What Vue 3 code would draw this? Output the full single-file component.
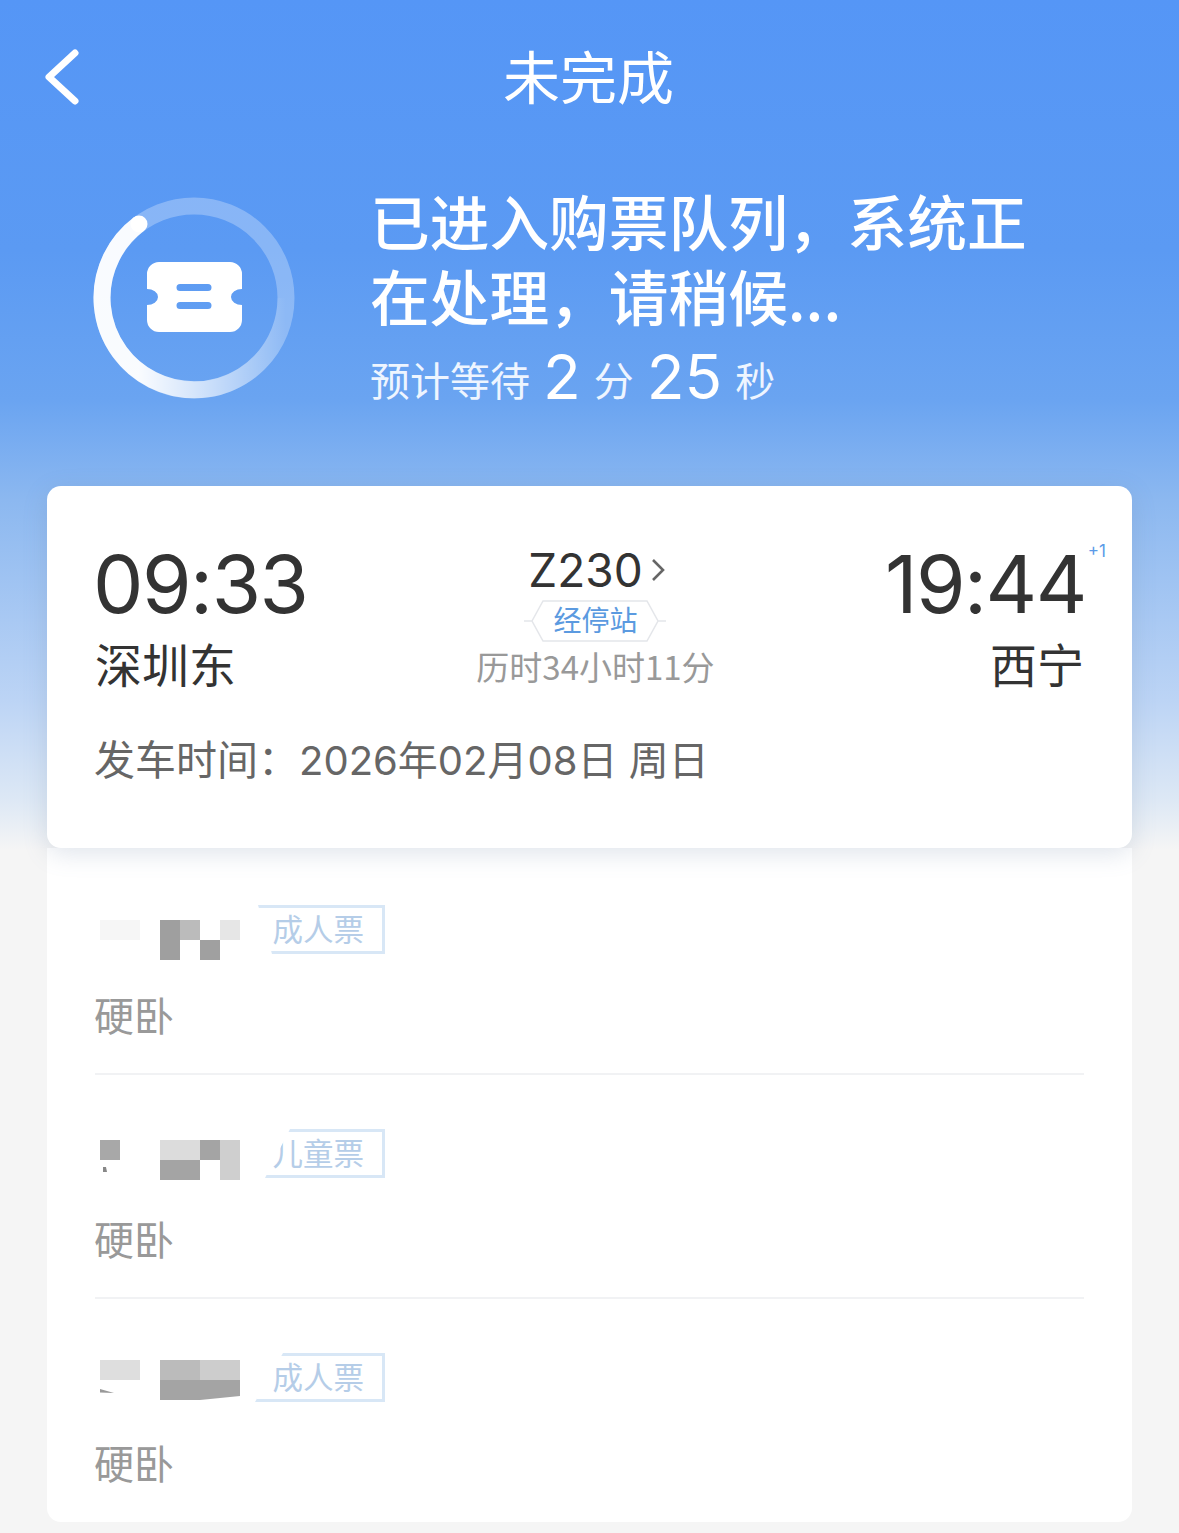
<template>
  <div class="page">
    <div class="nav">
      <svg class="back" width="36" height="56" viewBox="0 0 36 56" fill="none" stroke="#fff" stroke-width="7" stroke-linecap="round" stroke-linejoin="round">
        <path d="M31 4 L5 28 L31 52" />
      </svg>
      <div class="nav-title">未完成</div>
    </div>

    <div class="status">
      <svg class="ring" width="204" height="204" viewBox="0 0 204 204" fill="none">
        <defs>
          <linearGradient id="arc" x1="0" y1="0" x2="1" y2="0">
            <stop offset="0.2" stop-color="#ffffff" stop-opacity="0.95" />
            <stop offset="0.5" stop-color="#ffffff" stop-opacity="0.62" />
            <stop offset="1" stop-color="#ffffff" stop-opacity="0" />
          </linearGradient>
        </defs>
        <circle cx="102" cy="102" r="92" stroke="#fff" stroke-opacity="0.28" stroke-width="17" />
        <path d="M47 28 A92 92 0 1 0 194 102" stroke="url(#arc)" stroke-width="17" />
        <circle cx="47" cy="28" r="8.5" fill="#fff" />
        <path fill="#fff" fill-rule="evenodd" d="M67 66 H138 a12 12 0 0 1 12 12 V93 a11 8 0 0 0 0 16 V124 a12 12 0 0 1 -12 12 H67 a12 12 0 0 1 -12 -12 V109 a11 8 0 0 0 0 -16 V78 a12 12 0 0 1 12 -12 Z M88 88 a3.5 3.5 0 0 0 0 7 H116 a3.5 3.5 0 0 0 0 -7 Z M88 106 a3.5 3.5 0 0 0 0 7 H116 a3.5 3.5 0 0 0 0 -7 Z" />
      </svg>
      <div class="status-text">
        <div class="status-title">已进入购票队列，系统正在处理，请稍候...</div>
        <div class="status-wait">预计等待 <b>2</b> 分 <b>25</b> 秒</div>
      </div>
    </div>

    <div class="card">
      <div class="trip">
        <div class="end">
          <div class="time">09:33</div>
          <div class="station">深圳东</div>
        </div>
        <div class="middle">
          <div class="train">Z230
            <svg width="14" height="26" viewBox="0 0 14 26" fill="none" stroke="#666" stroke-width="2.6"><path d="M2 3 L12 13 L2 23" /></svg>
          </div>
          <div class="stops">
            <svg class="stops-shape" width="142" height="42" viewBox="0 0 142 42" fill="none" stroke="#e4e6ea" stroke-width="1.5">
              <path d="M0 21 H8 M134 21 H142 M8 21 L19 1 H123 L134 21 L123 41 H19 Z" />
            </svg>
            <span>经停站</span>
          </div>
          <div class="duration">历时34小时11分</div>
        </div>
        <div class="end end-right">
          <div class="time dark">19:44<sup>+1</sup></div>
          <div class="station">西宁</div>
        </div>
      </div>
      <div class="depart">发车时间：<span class="depart-date">2026年02月08日 周日</span></div>
    </div>

    <div class="list">
      <div v-for="p in passengers" :key="p.id" class="row">
        <div class="person">
          <div class="mosaic">
            <i v-for="(c, i) in p.cells" :key="i" :style="{ gridArea: c[0], background: c[1], clipPath: c[2] }"></i>
          </div>
          <div class="tag">
            <span class="tag-text">{{ p.type }}</span>
            <i class="tag-mask" :style="{ clipPath: `polygon(0 0, ${p.mask[0]}px 0, ${p.mask[1]}px 100%, 0 100%)` }"></i>
          </div>
        </div>
        <div class="seat">硬卧</div>
      </div>
    </div>
  </div>
</template>

<script setup>
// 姓名打码的色块，mask 是票种标签左侧被涂抹掉的宽度（上、下）
const passengers = [
  {
    id: 1,
    type: '成人票',
    mask: [4, 18],
    cells: [
      ['1 / 1 / 2 / 3', '#f6f6f6'],
      ['1 / 4 / 3 / 5', '#9f9f9f'],
      ['1 / 5 / 2 / 6', '#bbbbbb'],
      ['2 / 6 / 3 / 7', '#a0a0a0'],
      ['1 / 7 / 2 / 8', '#e6e6e6']
    ]
  },
  {
    id: 2,
    type: '儿童票',
    mask: [36, 11],
    cells: [
      ['1 / 1 / 2 / 2', '#a8a8a8'],
      ['2 / 1 / 3 / 2', '#888888', 'polygon(15% 35%, 30% 35%, 35% 60%, 15% 60%)'],
      ['1 / 4 / 2 / 6', '#dcdcdc'],
      ['1 / 6 / 2 / 7', '#a4a4a4'],
      ['1 / 7 / 3 / 8', '#cfcfcf'],
      ['2 / 4 / 3 / 6', '#a4a4a4']
    ]
  },
  {
    id: 3,
    type: '成人票',
    mask: [29, 1],
    cells: [
      ['1 / 1 / 2 / 3', '#dedede'],
      ['2 / 1 / 3 / 2', '#999999', 'polygon(0 45%, 70% 65%, 0 62%)'],
      ['1 / 4 / 2 / 6', '#bbbbbb'],
      ['1 / 6 / 2 / 8', '#cdcdcd'],
      ['2 / 4 / 3 / 8', '#a4a4a4', 'polygon(0 0, 100% 0, 100% 80%, 50% 100%, 0 100%)']
    ]
  }
]
</script>

<style>
html, body { margin: 0; background: #f5f5f5; }
</style>

<style scoped>
.page {
  width: 1179px;
  height: 1533px;
  overflow: hidden;
  box-sizing: border-box;
  background: linear-gradient(180deg, #5596f6 0, #5b9af3 250px, #6aa4f1 400px, #8cb8f0 500px, #bcd4f5 700px, #dde8f5 800px, #f5f5f5 850px);
  font-family: Inter, "Noto Sans CJK SC", sans-serif;
  color: #333;
}

.nav {
  position: relative;
  height: 156px;
  box-sizing: border-box;
  padding: 0 2px 7px 0;
  display: flex;
  justify-content: center;
  align-items: center;
}

.back {
  position: absolute;
  left: 44px;
  top: 49px;
}

.nav-title {
  font-family: "Noto Sans CJK SC", sans-serif;
  font-size: 57px;
  color: #fff;
  line-height: 1;
}

.status {
  display: flex;
  padding-left: 92px;
  height: 330px;
  box-sizing: border-box;
  padding-top: 40px;
}

.ring {
  flex: none;
}

.status-text {
  margin-left: 74px;
  width: 680px;
  color: #fff;
  font-family: "Noto Sans CJK SC", sans-serif;
}

.status-title {
  font-size: 59.7px;
  line-height: 75px;
  font-weight: 500;
  margin-top: -13px;
  width: 670px;
}

.status-wait {
  font-size: 40px;
  line-height: 64px;
  margin-top: 10px;
  color: #eef5ff;
}

.status-wait b {
  position: relative;
  top: 3px;
  font-family: Inter, sans-serif;
  font-weight: 400;
  font-size: 62px;
  line-height: 1;
  margin: 0 4px;
  color: #fff;
}

.card {
  margin: 0 47px;
  height: 362px;
  box-sizing: border-box;
  padding: 54px 48px 0;
  background: #fff;
  border-radius: 14px;
  box-shadow: 0 6px 24px rgba(100, 125, 160, 0.2);
  position: relative;
  z-index: 1;
}

.trip {
  display: flex;
  justify-content: space-between;
}

.end {
  width: 300px;
}

.end-right {
  text-align: right;
}

.time {
  font-size: 80px;
  line-height: 88px;
  color: #333;
  letter-spacing: -1.5px;
  margin-left: -2px;
}

.time.dark {
  position: relative;
  margin-right: -2px;
}

.time sup {
  position: absolute;
  right: -20px;
  top: 1px;
  font-size: 17px;
  line-height: 20px;
  color: #5b9ae8;
  letter-spacing: 0;
}

.station {
  font-family: "Noto Sans CJK SC", sans-serif;
  font-size: 47px;
  line-height: 58px;
  color: #333;
  margin-top: 6px;
}

.middle {
  display: flex;
  flex-direction: column;
  align-items: center;
  margin-top: 3px;
  margin-left: 12px;
}

.train {
  display: flex;
  align-items: center;
  gap: 8px;
  font-size: 46px;
  line-height: 54px;
  color: #333;
  margin-left: 2px;
}

.stops {
  position: relative;
  width: 142px;
  height: 42px;
  display: flex;
  align-items: center;
  justify-content: center;
  margin-top: 1px;
}

.stops-shape {
  position: absolute;
  left: 0;
  top: 2px;
}

.stops span {
  position: relative;
  font-family: "Noto Sans CJK SC", sans-serif;
  font-size: 28px;
  color: #5b9ae0;
}

.duration {
  font-family: "Noto Sans CJK SC", Inter, sans-serif;
  font-size: 33px;
  line-height: 48px;
  color: #999;
  margin-top: 2px;
  white-space: nowrap;
}

.depart {
  margin-top: 35px;
  font-family: "Noto Sans CJK SC", sans-serif;
  font-size: 41px;
  line-height: 60px;
  color: #666;
  margin-left: -1px;
}

.depart-date {
  font-family: Inter, "Noto Sans CJK SC", sans-serif;
  font-size: 40px;
}

.list {
  margin: 0 47px;
  height: 674px;
  box-sizing: border-box;
  padding: 3px 48px 0;
  background: #fff;
  border-radius: 0 0 14px 14px;
}

.row {
  height: 224px;
  box-sizing: border-box;
  padding-top: 54px;
  border-bottom: 2px solid #f1f2f4;
}

.row:last-child {
  border-bottom: none;
}

.person {
  display: flex;
  align-items: flex-start;
  height: 50px;
}

.mosaic {
  display: grid;
  grid-template-columns: repeat(7, 20px);
  grid-template-rows: repeat(2, 20px);
  margin: 15px 0 0 5px;
}

.row:nth-child(2) .mosaic {
  margin-top: 11px;
}

.row:nth-child(3) .mosaic {
  margin-top: 7px;
}

.tag {
  position: relative;
  margin-left: 14px;
  width: 131px;
  height: 49px;
  box-sizing: border-box;
  padding: 0 18px 4px 0;
  border: 3px solid #d8e7f6;
  display: flex;
  align-items: center;
  justify-content: flex-end;
}

.tag-text {
  font-family: "Noto Sans CJK SC", sans-serif;
  font-size: 30.5px;
  color: #b5cde8;
}

.tag-mask {
  position: absolute;
  left: -3px;
  top: -3px;
  bottom: -3px;
  width: 60px;
  background: #fff;
}

.seat {
  font-family: "Noto Sans CJK SC", sans-serif;
  font-size: 40px;
  line-height: 50px;
  color: #999;
  margin-top: 34px;
  margin-left: -1px;
}
</style>
